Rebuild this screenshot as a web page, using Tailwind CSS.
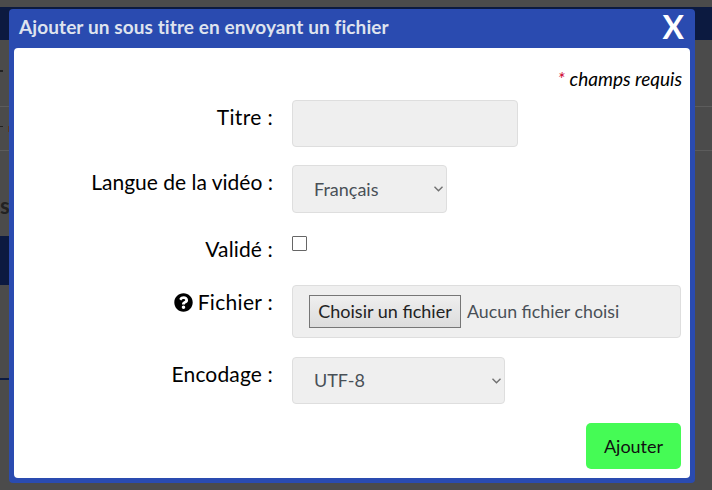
<!DOCTYPE html>
<html lang="fr">
<head>
<meta charset="UTF-8">
<title>Ajouter un sous titre</title>
<script src="https://cdn.jsdelivr.net/npm/@tailwindcss/browser@4"></script>
</head>
<body class="bg-[#4b4b4b] font-['Lato','Noto_Sans',sans-serif] overflow-hidden">
<div class="relative w-[712px] h-[490px] overflow-hidden">
  <!-- page dimmed behind the modal -->
  <div class="h-[7px]"></div>
  <div class="h-[33px] bg-[#0c1a40]"></div>
  <div class="h-[67px] border-b border-[#5c5c5c] pt-[30px]"><div class="w-[3px] h-[2px] bg-[#222]"></div></div>
  <div class="h-[44px] border-b border-[#5c5c5c] pt-[19px] flex items-start gap-[5px]"><div class="w-[3px] h-[1px] bg-[#222]"></div><div class="w-[1px] h-[6px] bg-[#5a3a1a]"></div></div>
  <div class="h-[85px] pt-[44px] text-[22px] font-bold text-[#222] leading-none">s</div>
  <div class="w-[60px] h-[49px] bg-[#0c1a40]"></div>
  <div class="w-[60px] h-[95px] border-b-2 border-[#0c1a40]"></div>

  <!-- modal -->
  <div class="absolute left-[9px] top-[9px] w-[686px] h-[474px] bg-[#2a4bb0] rounded-[4px] px-[5px] pb-[5px] flex flex-col">
    <div class="h-[39px] flex items-start justify-between">
      <h2 class="text-[19px] font-bold text-[#dfe3ee] leading-none pl-[5px] pt-[8px] tracking-[0.1px]">Ajouter un sous titre en envoyant un fichier</h2>
      <span class="text-[32px] font-bold text-white leading-none pt-[2px] pr-[6px]">X</span>
    </div>
    <form class="flex-1 bg-white rounded-[4px] pl-[10px] pr-[8px] pt-[19px] flex flex-col text-black">
      <p class="text-right text-[19px] italic leading-[24px]"><span class="text-[#d0103a]">*</span> champs requis</p>
      <div class="mt-[9px] flex flex-col">
        <div class="flex h-[65px]">
          <label class="w-[249px] shrink-0 text-right text-[21px] tracking-[0.35px] leading-[34px]">Titre :</label>
          <input type="text" class="ml-[19px] w-[226px] h-[47px] bg-[#efefef] border border-[#dedede] rounded-[4px]">
        </div>
        <div class="flex h-[64px]">
          <label class="w-[249px] shrink-0 text-right text-[21px] leading-[34px]">Langue de la vidéo :</label>
          <div class="relative ml-[19px] w-[155px] h-[48px]">
            <select class="w-full h-full appearance-none bg-[#efefef] border border-[#dedede] rounded-[4px] pl-[21px] text-[18px] text-[#495057]"><option>Français</option></select>
            <svg class="absolute right-[4px] top-[21px] w-[9px] h-[6px]" viewBox="0 0 9 6" fill="none" stroke="#707070" stroke-width="1.4"><path d="M0.500 0.800 4.500 4.800 8.500 0.800"/></svg>
          </div>
        </div>
        <div class="flex h-[56px]">
          <label class="w-[249px] shrink-0 text-right text-[21px] tracking-[0.15px] leading-[34px] pt-[3px]">Validé :</label>
          <input type="checkbox" class="ml-[19px] mt-[7px] w-[15px] h-[15px] appearance-none bg-white border border-[#666] rounded-[1px]">
        </div>
        <div class="flex h-[72px]">
          <label class="w-[249px] shrink-0 text-right text-[21px] tracking-[0.3px] leading-[34px] flex justify-end items-center h-[34px] gap-[5px]">
            <svg class="w-[19px] h-[19px]" viewBox="0 0 512 512"><path fill="#000" d="M504 256c0 137-111 248-248 248S8 393 8 256 119 8 256 8s248 111 248 248zM262.700 90c-54.500 0-89.300 23-116.500 63.800-3.500 5.300-2.400 12.400 2.700 16.300l34.700 26.300c5.200 3.900 12.600 3 16.700-2.100 17.900-22.700 30.100-35.800 57.300-35.800 20.400 0 45.700 13.100 45.700 32.900 0 15-12.400 22.700-32.500 34-23.500 13.200-54.600 29.600-54.600 70.600V300c0 6.600 5.400 12 12 12h56c6.600 0 12-5.400 12-12v-1.300c0-28.400 83-29.600 83-106.700 0-58-60.200-102-116.500-102zM256 338c-25.400 0-46 20.600-46 46s20.600 46 46 46 46-20.600 46-46-20.600-46-46-46z"/></svg>
            <span>Fichier :</span>
          </label>
          <div class="ml-[19px] w-[389px] shrink-0 h-[53px] bg-[#efefef] border border-[#dedede] rounded-[4px] flex items-center pl-[16px] text-[18px] text-[#495057]">
            <span class="h-[33px] w-[152px] justify-center border border-[#767676] bg-gradient-to-b from-[#efefef] to-[#dcdcdc] text-[#222] flex items-center">Choisir un fichier</span>
            <span class="ml-[6px] text-[17.800px]">Aucun fichier choisi</span>
          </div>
        </div>
        <div class="flex h-[66px]">
          <label class="w-[249px] shrink-0 text-right text-[21px] tracking-[0.15px] leading-[34px]">Encodage :</label>
          <div class="relative ml-[19px] w-[213px] h-[47px]">
            <select class="w-full h-full appearance-none bg-[#efefef] border border-[#dedede] rounded-[4px] pl-[21px] text-[18px] text-[#495057]"><option>UTF-8</option></select>
            <svg class="absolute right-[4px] top-[21px] w-[9px] h-[6px]" viewBox="0 0 9 6" fill="none" stroke="#707070" stroke-width="1.4"><path d="M0.500 0.800 4.500 4.800 8.500 0.800"/></svg>
          </div>
        </div>
      </div>
      <div class="flex justify-end pr-[1px]">
        <button type="button" class="w-[95px] h-[46px] bg-[#45fb55] rounded-[5px] text-[18px] text-[#111]">Ajouter</button>
      </div>
    </form>
  </div>
</div>
</body>
</html>
